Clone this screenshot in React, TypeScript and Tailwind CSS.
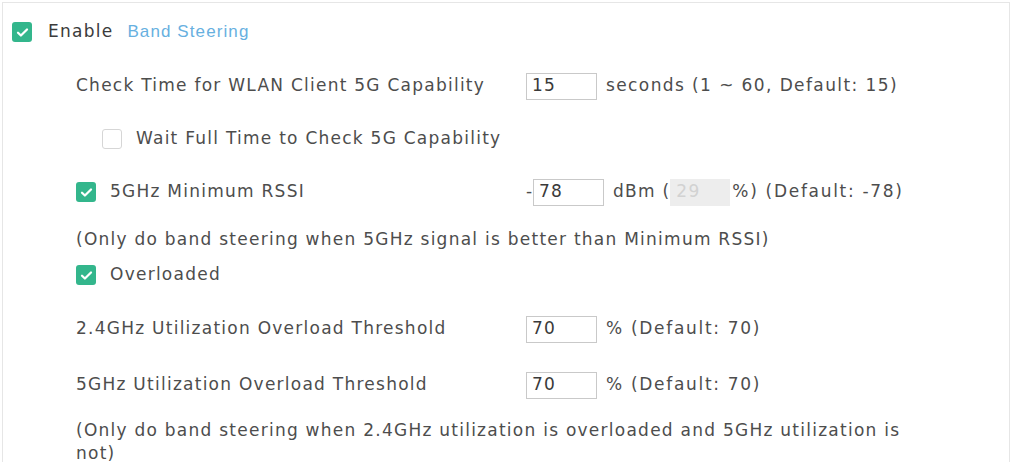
import type { ReactNode } from "react";

const LABEL = "w-[450px] shrink-0";
const SUFFIX = "tracking-[1.7px]";

function Checkbox({ checked }: { checked: boolean }) {
  if (!checked) {
    return (
      <span className="inline-block h-[20px] w-[20px] shrink-0 rounded-[3px] border border-[#d6d6d6] bg-white" />
    );
  }
  return (
    <span className="flex h-[20px] w-[20px] shrink-0 items-center justify-center rounded-[3px] bg-[#33b68c]">
      <svg viewBox="0 0 16 16" className="h-[15px] w-[15px]" fill="none">
        <path
          d="M3.2 8.2l3.1 3L12.8 4.8"
          stroke="#fff"
          strokeWidth="2.4"
          strokeLinecap="round"
          strokeLinejoin="round"
        />
      </svg>
    </span>
  );
}

function Field({ value, disabled }: { value: string; disabled?: boolean }) {
  return (
    <span
      className={
        disabled
          ? "flex h-[27px] w-[60px] shrink-0 items-center bg-[#ededed] pl-[6px] text-[#d2d2d2]"
          : "flex h-[27px] w-[71px] shrink-0 items-center border border-[#c9c9c9] bg-white pl-[5px] text-[#3a3a3a]"
      }
    >
      {value}
    </span>
  );
}

function Row({ className, children }: { className: string; children: ReactNode }) {
  return <div className={`flex h-[28px] items-center whitespace-nowrap ${className}`}>{children}</div>;
}

export default function App() {
  return (
    <div className="h-[462px] w-[1012px] overflow-hidden bg-white pl-[2px] pt-[2px] pr-[2px]">
      <div
        className="h-[470px] border border-[#e6e6e6] pt-[15px] text-[17px] tracking-[1.25px] text-[#4d4d4d]"
        style={{ fontFamily: '"DejaVu Sans", Verdana, sans-serif' }}
      >
        <Row className="pl-[9px]">
          <Checkbox checked />
          <span className="ml-[16px] text-[#3b3b3b]">Enable</span>
          <span
            className="ml-[14px] tracking-[1.1px] text-[#67b0df]"
            style={{ fontFamily: '"Liberation Sans", Arial, sans-serif' }}
          >
            Band Steering
          </span>
        </Row>

        <Row className="mt-[26px] pl-[73px]">
          <span className={LABEL}>Check Time for WLAN Client 5G Capability</span>
          <Field value="15" />
          <span className="ml-[9px] tracking-[1.4px]">seconds (1 ~ 60, Default: 15)</span>
        </Row>

        <Row className="mt-[25px] pl-[99px]">
          <Checkbox checked={false} />
          <span className="ml-[14px]">Wait Full Time to Check 5G Capability</span>
        </Row>

        <Row className="mt-[25px] pl-[73px]">
          <span className={`${LABEL} flex items-center`}>
            <Checkbox checked />
            <span className="ml-[14px]">5GHz Minimum RSSI</span>
          </span>
          <span className="w-[7px] tracking-normal">-</span>
          <Field value="78" />
          <span className="ml-[9px]">dBm (</span>
          <Field value="29" disabled />
          <span className={`ml-[2px] ${SUFFIX}`}>%) (Default: -78)</span>
        </Row>

        <Row className="mt-[20px] pl-[73px]">
          <span>(Only do band steering when 5GHz signal is better than Minimum RSSI)</span>
        </Row>

        <Row className="mt-[7px] pl-[73px]">
          <Checkbox checked />
          <span className="ml-[14px]">Overloaded</span>
        </Row>

        <Row className="mt-[26px] pl-[73px]">
          <span className={LABEL}>2.4GHz Utilization Overload Threshold</span>
          <Field value="70" />
          <span className={`ml-[9px] ${SUFFIX}`}>% (Default: 70)</span>
        </Row>

        <Row className="mt-[28px] pl-[73px]">
          <span className={LABEL}>5GHz Utilization Overload Threshold</span>
          <Field value="70" />
          <span className={`ml-[9px] ${SUFFIX}`}>% (Default: 70)</span>
        </Row>

        <p className="mt-[20px] w-[930px] pl-[73px] leading-[23px]">
          (Only do band steering when 2.4GHz utilization is overloaded and 5GHz utilization is
          not)
        </p>
      </div>
    </div>
  );
}
